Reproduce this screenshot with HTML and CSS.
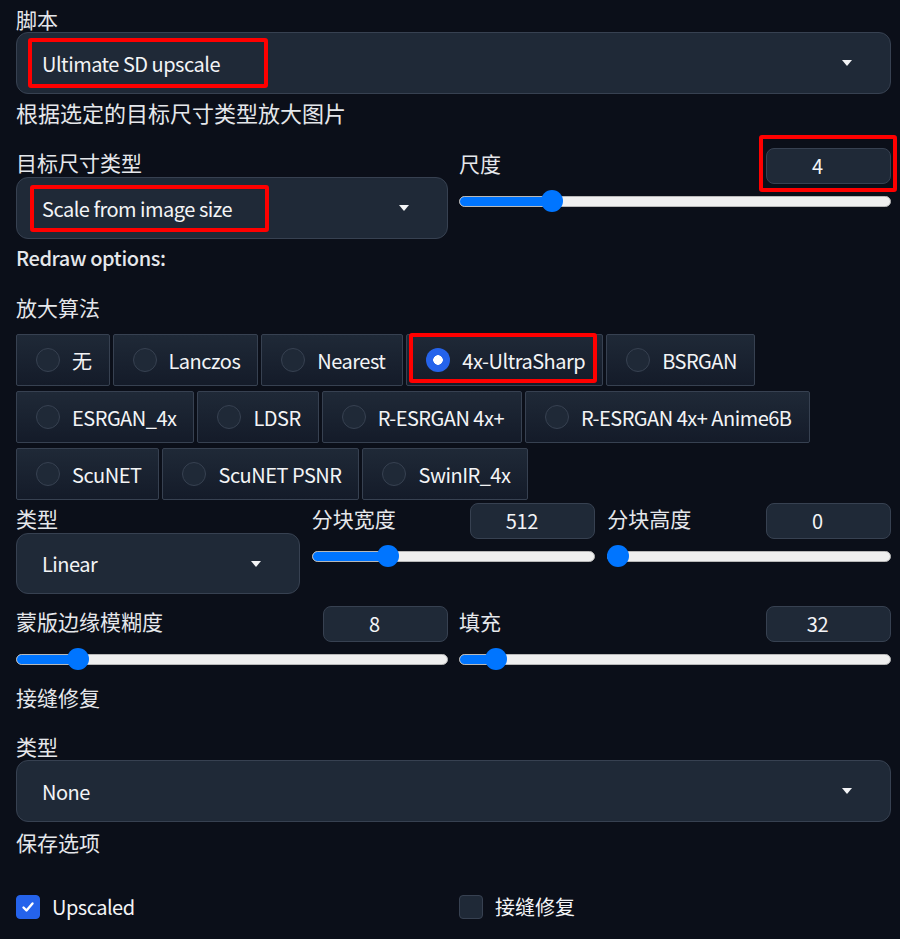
FILE: index.html
```html
<!DOCTYPE html>
<html lang="zh">
<head>
    <meta charset="UTF-8">
    <meta name="viewport" content="width=device-width, initial-scale=1.0">
    <title>Ultimate SD upscale</title>
    <link rel="stylesheet" href="styles.css">
</head>
<body>
    <div class="page">
        <div class="label">脚本</div>
        <div class="dropdown dd-script">
            <span class="value">Ultimate SD upscale</span>
            <span class="caret"></span>
            <span class="mark mark-script"></span>
        </div>
        <p class="desc">根据选定的目标尺寸类型放大图片</p>

        <div class="grid2 row-target">
            <div class="col">
                <div class="label">目标尺寸类型</div>
                <div class="dropdown dd-scale">
                    <span class="value">Scale from image size</span>
                    <span class="caret"></span>
                    <span class="mark mark-scale"></span>
                </div>
            </div>
            <div class="col">
                <div class="slider-head">
                    <span class="label">尺度</span>
                    <div class="num">4<span class="mark mark-num"></span></div>
                </div>
                <div class="slider" style="--p:0.2"><div class="track"><div class="fill"></div></div><div class="thumb"></div></div>
            </div>
        </div>

        <div class="subhead">Redraw options:</div>
        <div class="label section">放大算法</div>
        <div class="radios">
            <div class="radio-item"><span class="radio"></span>无</div>
            <div class="radio-item"><span class="radio"></span>Lanczos</div>
            <div class="radio-item"><span class="radio"></span>Nearest</div>
            <div class="radio-item selected"><span class="radio"></span>4x-UltraSharp<span class="mark mark-radio"></span></div>
            <div class="radio-item"><span class="radio"></span>BSRGAN</div>
            <div class="radio-item"><span class="radio"></span>ESRGAN_4x</div>
            <div class="radio-item"><span class="radio"></span>LDSR</div>
            <div class="radio-item"><span class="radio"></span>R-ESRGAN 4x+</div>
            <div class="radio-item"><span class="radio"></span>R-ESRGAN 4x+ Anime6B</div>
            <div class="radio-item"><span class="radio"></span>ScuNET</div>
            <div class="radio-item"><span class="radio"></span>ScuNET PSNR</div>
            <div class="radio-item"><span class="radio"></span>SwinIR_4x</div>
        </div>

        <div class="grid3 row-tile">
            <div class="col">
                <div class="label pad">类型</div>
                <div class="dropdown dd-type">
                    <span class="value">Linear</span>
                    <span class="caret"></span>
                </div>
            </div>
            <div class="col">
                <div class="slider-head">
                    <span class="label">分块宽度</span>
                    <div class="num">512</div>
                </div>
                <div class="slider" style="--p:0.25"><div class="track"><div class="fill"></div></div><div class="thumb"></div></div>
            </div>
            <div class="col">
                <div class="slider-head">
                    <span class="label">分块高度</span>
                    <div class="num">0</div>
                </div>
                <div class="slider" style="--p:0"><div class="track"><div class="fill"></div></div><div class="thumb"></div></div>
            </div>
        </div>

        <div class="grid2 row-mask">
            <div class="col">
                <div class="slider-head">
                    <span class="label">蒙版边缘模糊度</span>
                    <div class="num">8</div>
                </div>
                <div class="slider" style="--p:0.125"><div class="track"><div class="fill"></div></div><div class="thumb"></div></div>
            </div>
            <div class="col">
                <div class="slider-head">
                    <span class="label">填充</span>
                    <div class="num">32</div>
                </div>
                <div class="slider" style="--p:0.0625"><div class="track"><div class="fill"></div></div><div class="thumb"></div></div>
            </div>
        </div>

        <div class="label seam">接缝修复</div>
        <div class="label seam-type">类型</div>
        <div class="dropdown dd-seam">
            <span class="value">None</span>
            <span class="caret"></span>
        </div>
        <div class="label save">保存选项</div>

        <div class="grid2 checks">
            <label class="check-item"><span class="checkbox checked"><svg width="16" height="16" viewBox="0 0 16 16"><path d="M3.5 8.5l3 3 6-7" fill="none" stroke="#fff" stroke-width="2.4" stroke-linecap="round" stroke-linejoin="round"/></svg></span>Upscaled</label>
            <label class="check-item"><span class="checkbox"></span>接缝修复</label>
        </div>
    </div>
</body>
</html>
```

FILE: styles.css
```css
html,body{
    margin:0;
    background:#0b0f19;
    font-family: "Noto Sans CJK SC", "Noto Sans", sans-serif;
    color:#e5e7eb;
}
.page{
    padding:7px 9px 20px 16px;
}
.label{
    font-size:21px;
    line-height:24px;
    color:#e5e7eb;
}
.desc{
    margin:6px 0 0;
    font-size:22px;
    line-height:24px;
    color:#e5e7eb;
}
.dropdown{
    position:relative;
    display:flex;
    align-items:center;
    justify-content:space-between;
    box-sizing:border-box;
    height:62px;
    padding:0 38px 0 25px;
    background:#1f2937;
    border:1px solid #374151;
    border-radius:12px;
    font-size:20px;
    letter-spacing:-0.5px;
    color:#f3f4f6;
}
.dd-script{
    margin-top:1px;
}
.caret{
    width:0;
    height:0;
    border-left:5px solid transparent;
    border-right:5px solid transparent;
    border-top:6px solid #f3f4f6;
}
.mark{
    position:absolute;
    box-sizing:border-box;
    border:4px solid #ff0000;
    border-radius:3px;
    pointer-events:none;
}
.mark-script{
    left:11px;
    top:5px;
    width:240px;
    height:50px;
}
.mark-scale{
    left:13px;
    top:7px;
    width:239px;
    height:47px;
}
.mark-num{
    left:-8px;
    top:-14px;
    width:138px;
    height:57px;
}
.mark-radio{
    left:2px;
    top:-2px;
    width:188px;
    height:50px;
}

.grid2{
    display:grid;
    grid-template-columns:1fr 1fr;
    column-gap:11px;
}
.grid3{
    display:grid;
    grid-template-columns:1fr 1fr 1fr;
    column-gap:12px;
}
.row-target{
    margin-top:24px;
}
.row-target .col > .label{
    padding-top:2px;
}
.dd-scale{
    margin-top:3px;
}
.slider-head{
    display:flex;
    justify-content:space-between;
    align-items:flex-start;
    height:36px;
}
.slider-head .label{
    padding-top:3px;
}
.num{
    position:relative;
    box-sizing:border-box;
    width:125px;
    height:36px;
    padding-right:22px;
    background:#1f2937;
    border:1px solid #374151;
    border-radius:8px;
    text-align:center;
    font-size:20px;
    line-height:34px;
    letter-spacing:-0.3px;
    color:#f3f4f6;
}
.slider{
    position:relative;
    display:flex;
    align-items:center;
    height:22px;
    margin-top:6px;
}
.track{
    flex:1;
    box-sizing:border-box;
    height:11px;
    background:#efefef;
    border:1px solid #b8b8b8;
    border-radius:6px;
    overflow:hidden;
}
.fill{
    height:100%;
    width:calc(var(--p) * (100% - 22px) + 11px);
    background:#0075ff;
}
.thumb{
    position:absolute;
    top:0;
    left:calc(var(--p) * (100% - 22px));
    width:22px;
    height:22px;
    border-radius:50%;
    background:#0075ff;
}

.subhead{
    margin-top:7px;
    font-size:20px;
    line-height:24px;
    font-weight:500;
    letter-spacing:-0.4px;
    color:#e5e7eb;
}
.section{
    margin-top:25px;
}
.radios{
    display:flex;
    flex-wrap:wrap;
    gap:5px 3px;
    margin-top:15px;
}
.radio-item{
    position:relative;
    display:flex;
    align-items:center;
    gap:12px;
    box-sizing:border-box;
    height:52px;
    padding:0 17px 0 19px;
    background:linear-gradient(to top, #141b29, #1f2937);
    border:1px solid #374151;
    border-radius:2px;
    font-size:20px;
    letter-spacing:-0.5px;
    color:#f3f4f6;
}
.radio{
    flex:none;
    box-sizing:border-box;
    width:24px;
    height:24px;
    border-radius:50%;
    background:#1f2937;
    border:1px solid #374151;
}
.selected .radio{
    border:none;
    background:radial-gradient(circle, #fff 0 4.5px, #2563eb 5px);
}

.row-tile{
    margin-top:3px;
}
.label.pad{
    padding-top:3px;
}
.dd-type{
    margin-top:3px;
    height:61px;
}
.row-mask{
    margin-top:12px;
}
.seam{
    margin-top:15px;
}
.seam-type{
    margin-top:25px;
}
.dd-seam{
    margin-top:2px;
}
.save{
    margin-top:8px;
}
.checks{
    margin-top:41px;
}
.check-item{
    display:flex;
    align-items:center;
    gap:12px;
    font-size:20px;
    line-height:24px;
    color:#f3f4f6;
}
.check-item:first-child{
    letter-spacing:-0.5px;
}
.checkbox{
    display:flex;
    align-items:center;
    justify-content:center;
    box-sizing:border-box;
    width:24px;
    height:24px;
    border-radius:4px;
    background:#1f2937;
    border:1px solid #374151;
}
.checkbox.checked{
    background:#2563eb;
    border-color:#2563eb;
}
```
